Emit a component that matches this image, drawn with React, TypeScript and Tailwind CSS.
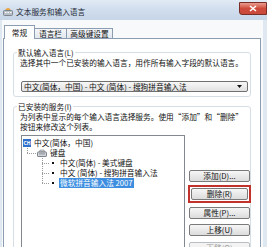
import React from "react";

const FONT = { fontFamily: '"Noto Sans CJK SC", "Noto Sans", sans-serif' };

function Btn({ label, disabled }: { label: string; disabled?: boolean }) {
  return (
    <div
      className={
        "h-[12px] w-full rounded-[2px] border flex items-center justify-center leading-none " +
        (disabled
          ? "border-[#b9bec3] bg-[#f3f3f3] text-[#9a9a9a]"
          : "border-[#7a7a7a] bg-gradient-to-b from-[#f6f6f6] to-[#dcdcdc] text-[#111]")
      }
    >
      {label}
    </div>
  );
}

function TreeBranch({ last }: { last?: boolean }) {
  return (
    <svg width="37" height="10" className="shrink-0">
      <line x1="20.5" y1="0" x2="20.5" y2={last ? 5 : 10} stroke="#9a9a9a" strokeDasharray="1 1" />
      <line x1="20" y1="5.5" x2="28" y2="5.5" stroke="#9a9a9a" strokeDasharray="1 1" />
      <rect x="30" y="4" width="2" height="2" fill="#111" />
    </svg>
  );
}

export default function App() {
  return (
    <div
      className="w-[267px] h-[247px] overflow-hidden flex flex-col bg-[#dfe8f1] text-[7.7px] text-[#111]"
      style={FONT}
    >
      {/* title bar */}
      <div className="h-[20px] shrink-0 flex items-center bg-gradient-to-b from-[#e2ebf5] via-[#d0dded] to-[#c6d6e8]">
        <svg width="10" height="9" className="ml-[3px] mt-[3px] shrink-0" viewBox="0 0 10 9">
          <rect x="0.5" y="3.5" width="9" height="5" rx="1" fill="#b9bfc6" stroke="#7d858e" />
          <rect x="2" y="5" width="1.5" height="1" fill="#fff" />
          <rect x="4.5" y="5" width="1.5" height="1" fill="#fff" />
          <rect x="7" y="5" width="1.5" height="1" fill="#fff" />
          <path d="M2 3 Q5 -1 8 3 Z" fill="#e9a23b" />
        </svg>
        <span className="ml-[3px] mt-[3px] text-[7.7px] leading-none text-[#1e2a36]">文本服务和输入语言</span>
        <div className="ml-auto mt-[-4px] w-[28px] h-[13px] rounded-bl-[3px] border border-[#7a2d26] bg-gradient-to-b from-[#e99b8f] via-[#cf4a3b] to-[#c8493b] flex items-center justify-center">
          <svg width="8" height="7" viewBox="0 0 8 7">
            <path d="M1 1 L7 6 M7 1 L1 6" stroke="#fff" strokeWidth="1.6" />
          </svg>
        </div>
      </div>

      {/* body */}
      <div className="flex-1 flex flex-col ml-[2px] mr-[4px] pl-[1px] pr-[2px] pt-[5px] bg-[#f7f9fb]">
        {/* tabs */}
        <div className="h-[13px] flex items-end pl-[1px] relative z-10">
          <div className="h-[14px] w-[31px] -mb-px border border-b-0 border-[#8c9db1] bg-white flex items-center justify-center leading-none">
            常规
          </div>
          <div className="h-[10px] w-[32px] border border-l-0 border-b-0 border-[#8c9db1] bg-gradient-to-b from-[#f4f6f9] to-[#e3e8ee] flex items-center justify-center leading-none">
            语言栏
          </div>
          <div className="h-[10px] w-[46px] border border-l-0 border-b-0 border-[#8c9db1] bg-gradient-to-b from-[#f4f6f9] to-[#e3e8ee] flex items-center justify-center leading-none">
            高级键设置
          </div>
        </div>

        {/* panel */}
        <div className="flex-1 border border-[#8c9db1] bg-white flex flex-col">
          <fieldset className="ml-[9px] mt-[10px] w-[238px] border border-[#d5dfe5] rounded-[3px] pb-[4px]">
            <legend className="ml-[3px] px-[1px] leading-[7px]">默认输入语言(L)</legend>
            <div className="pl-[6px] mt-[3px] leading-[8px]">选择其中一个已安装的输入语言，用作所有输入字段的默认语言。</div>
            <div className="ml-[7px] mt-[14px] w-[227px] h-[11px] border border-[#707070] rounded-[2px] bg-gradient-to-b from-[#f7f7f7] to-[#e2e2e2] flex items-center pl-[2px] leading-none">
              <span>中文(简体，中国) - 中文 (简体) - 搜狗拼音输入法</span>
              <svg width="5" height="3" className="ml-auto mr-[5px]" viewBox="0 0 5 3">
                <path d="M0 0 H5 L2.5 3 Z" fill="#111" />
              </svg>
            </div>
          </fieldset>

          <fieldset className="ml-[9px] mt-[6px] w-[238px] border border-[#d5dfe5] rounded-[3px] pb-[5px]">
            <legend className="ml-[3px] px-[1px] leading-[7px]">已安装的服务(I)</legend>
            <div className="pl-[6px] mt-[2px] leading-[10px]">
              为列表中显示的每个输入语言选择服务。使用“添加”和“删除”
              <br />
              按钮来修改这个列表。
            </div>
            <div className="mt-[3px] flex items-start">
              <div className="ml-[7px] w-[164px] h-[120px] border border-[#828790] bg-white pt-[2px] leading-[10px]">
                <div className="h-[10px] flex items-center pl-[1px]">
                  <div className="w-[8px] h-[8px] bg-[#2f6fcc] text-white text-[5px] leading-[8px] font-bold flex items-center justify-center">
                    CH
                  </div>
                  <span className="ml-[3px]">中文(简体，中国)</span>
                </div>
                <div className="h-[10px] flex items-center">
                  <svg width="15" height="10" className="shrink-0">
                    <line x1="5.5" y1="0" x2="5.5" y2="5" stroke="#9a9a9a" strokeDasharray="1 1" />
                    <line x1="5" y1="5.5" x2="15" y2="5.5" stroke="#9a9a9a" strokeDasharray="1 1" />
                  </svg>
                  <svg width="10" height="8" className="shrink-0" viewBox="0 0 10 8">
                    <path d="M2 3 L3 1 H7 L8 3 Z" fill="#c9ccd0" stroke="#8a8f95" strokeWidth="0.6" />
                    <rect x="0.5" y="3" width="9" height="4.5" rx="0.6" fill="#d2d5d9" stroke="#7d838a" />
                    <rect x="2" y="4.4" width="6" height="1" fill="#8a9098" />
                  </svg>
                  <span className="ml-[3px]">键盘</span>
                </div>
                <div className="h-[10px] flex items-center">
                  <TreeBranch />
                  <span className="ml-[1px]">中文(简体) - 美式键盘</span>
                </div>
                <div className="h-[10px] flex items-center">
                  <TreeBranch />
                  <span className="ml-[1px]">中文 (简体) - 搜狗拼音输入法</span>
                </div>
                <div className="h-[10px] flex items-center">
                  <TreeBranch last />
                  <span className="bg-[#3d8ee0] text-white px-[1px] h-[10px] leading-[10px]">微软拼音输入法 2007</span>
                </div>
              </div>
              <div className="ml-[4px] mt-[35px] w-[61px] flex flex-col">
                <Btn label="添加(D)..." />
                <div className="mt-[3px] border-2 border-[#c2312c] p-[1px] -mx-[1px]">
                  <Btn label="删除(R)" />
                </div>
                <div className="mt-[4px]">
                  <Btn label="属性(P)..." />
                </div>
                <div className="mt-[5px]">
                  <Btn label="上移(U)" />
                </div>
                <div className="mt-[6px]">
                  <Btn label="下移(O)" disabled />
                </div>
              </div>
            </div>
          </fieldset>
        </div>
      </div>
    </div>
  );
}
